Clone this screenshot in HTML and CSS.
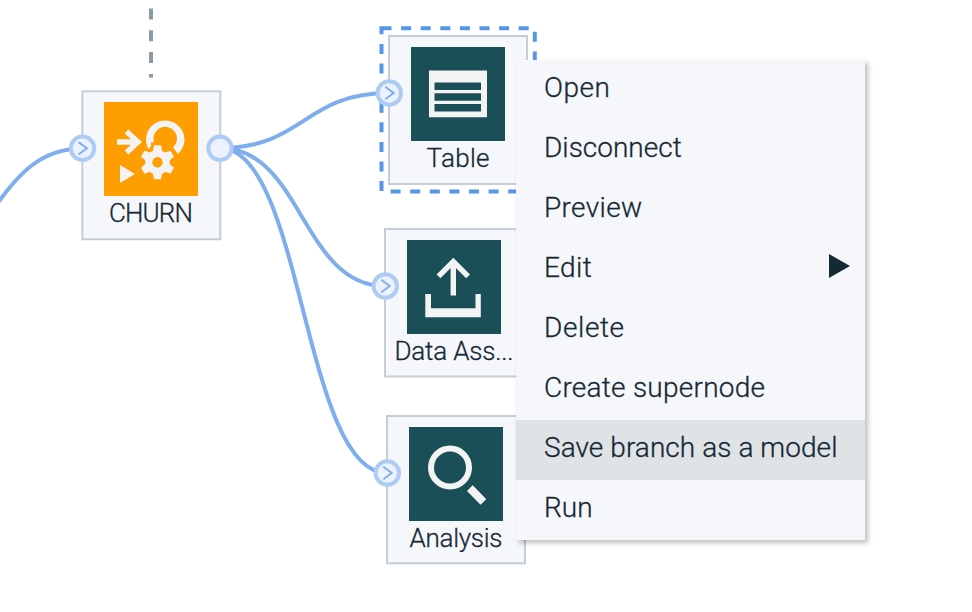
FILE: index.html
```html
<!DOCTYPE html>
<html lang="en">
<head>
<meta charset="utf-8">
<title>Flow canvas</title>
<link rel="stylesheet" href="styles.css">
</head>
<body>
<svg class="canvas" width="972" height="612" viewBox="0 0 972 612">
  <defs>
    <g id="port-in">
      <circle class="port" r="11.7"/>
      <path class="chevron" d="M-4 -6.2 4.4 0 -4 6.2"/>
    </g>
  </defs>
  <path class="association" d="M151 8.5V77.5"/>
  <path class="link" d="M-12 217C16 175 40 148.500 82 148.500"/>
  <path class="link" d="M220 148C304 148 304 93 389 93"/>
  <path class="link" d="M220 148C302 148 302 286 385 286"/>
  <path class="link" d="M220 148C303 148 303 473 387 473"/>

  <g transform="translate(82 91)">
    <rect class="node" x=".3" y=".3" width="138" height="148"/>
    <rect class="tile model" x="22" y="11" width="94" height="94"/>
    <g class="glyph" transform="translate(22 11)">
      <path class="stroke5" d="M13 40H34M22.500 29.500 34 40 22.500 50.500"/>
      <path d="M16 63V81L31 72z"/>
      <path d="M44.700 47.500A19.200 19.200 0 1 1 74 52L69 45.500A11.800 11.800 0 1 0 50 40.300H47V44z"/>
      <g transform="translate(53.500 60.200)">
        <circle r="12.300"/>
        <path id="tooth" d="M-4.800-10-3.500-17H3.500L4.800-10V10L3.500 17H-3.500L-4.800 10z"/>
        <use href="#tooth" transform="rotate(60)"/>
        <use href="#tooth" transform="rotate(120)"/>
        <circle class="model" r="5.200"/>
      </g>
    </g>
    <text class="label" x="69" y="131" text-anchor="middle" textLength="84">CHURN</text>
    <use href="#port-in" x=".5" y="57.300"/>
    <circle class="port" cx="138" cy="57.300" r="11.7"/>
  </g>

  <g transform="translate(389 36)">
    <rect class="selection" x="-7.500" y="-7.700" width="153.300" height="163.300"/>
    <rect class="node" width="138" height="148"/>
    <rect class="tile output" x="22" y="11" width="94" height="94"/>
    <path class="glyph" fill-rule="evenodd" d="M40 34.500h58v46.700H40zM45.500 46.500v7.500h46.500v-7.500zM45.500 57.300v7.500h46.500v-7.500zM45.500 68v7.500h46.500V68z"/>
    <text class="label" x="69" y="131" text-anchor="middle" textLength="63">Table</text>
    <use href="#port-in" x=".3" y="57"/>
  </g>

  <g transform="translate(385 229)">
    <rect class="node" width="138" height="147.500"/>
    <rect class="tile output" x="22" y="11" width="94" height="94"/>
    <path class="stroke5" d="M68.300 66.500V32M53.500 47.300 68.300 32.500 83.100 47.300"/>
    <path class="glyph" d="M40.300 65h5.700v14.300h44.500V65h5.300v23.300H40.300z"/>
    <text class="label" x="69" y="131" text-anchor="middle" textLength="119">Data Ass...</text>
    <use href="#port-in" x=".3" y="57"/>
  </g>

  <g transform="translate(387 416)">
    <rect class="node" width="138" height="147.300"/>
    <rect class="tile output" x="22" y="11" width="94" height="94"/>
    <circle class="stroke6" cx="63" cy="51.500" r="19"/>
    <path class="glyph" d="M85.700 69.300 99.300 83.300 93.500 88.700 80 75z"/>
    <text class="label" x="69" y="131" text-anchor="middle" textLength="93">Analysis</text>
    <use href="#port-in" x=".3" y="57"/>
  </g>
</svg>

<ul class="menu">
  <li class="item open">Open</li>
  <li class="item disconnect">Disconnect</li>
  <li class="item preview">Preview</li>
  <li class="item edit">Edit<svg class="submenu" viewBox="0 0 21 24"><path d="M0 0 21 12 0 24z"/></svg></li>
  <li class="item delete">Delete</li>
  <li class="item supernode">Create supernode</li>
  <li class="item save active">Save branch as a model</li>
  <li class="item run">Run</li>
</ul>
</body>
</html>
```
FILE: styles.css
```css
body {
  margin: 0;
  width: 972px;
  height: 612px;
  overflow: hidden;
  background: #fff;
  color: #152935;
  font-family: Roboto, "Liberation Sans", sans-serif;
  font-weight: 300;
}
.canvas { display: block; }
.association { stroke: #8c9ba5; stroke-width: 4; stroke-dasharray: 11 10.8; }
.link { fill: none; stroke: #7eaeec; stroke-width: 4; }
.node { fill: #f5f7fb; stroke: #c5ced4; stroke-width: 2; }
.selection { fill: none; stroke: #5596e6; stroke-width: 4; stroke-dasharray: 10 9.6; }
.model { fill: #ff9e00; }
.output { fill: #1a4f57; }
.glyph { fill: #f3f3f3; }
.stroke5 { fill: none; stroke: #f3f3f3; stroke-width: 5.4; }
.stroke6 { fill: none; stroke: #f3f3f3; stroke-width: 6; }
.port { fill: #edf3fe; stroke: #aeccf3; stroke-width: 4; }
.chevron { fill: none; stroke: #7eaeec; stroke-width: 2; }
.label { fill: #152935; stroke: #152935; stroke-width: .3px; font-size: 26px; }
.menu {
  position: absolute;
  left: 516px;
  top: 60px;
  width: 349px;
  margin: 0;
  padding: 0;
  list-style: none;
  background: #f5f7fb;
  box-shadow: 3px 3px 5px rgba(0, 0, 0, .25);
}
.item {
  display: flex;
  align-items: center;
  justify-content: space-between;
  height: 60px;
  box-sizing: border-box;
  padding: 0 15px 5px 28px;
  font-size: 28px;
  line-height: 40px;
  -webkit-text-stroke: .3px #152935;
}
.open { letter-spacing: .5px; }
.preview { letter-spacing: .35px; }
.edit { letter-spacing: .4px; }
.delete { letter-spacing: .6px; }
.supernode { letter-spacing: .25px; }
.save { letter-spacing: .06px; }
.active { background: #dfe3e6; }
.submenu { width: 21px; height: 24px; margin-top: -4px; fill: #152935; }
```
